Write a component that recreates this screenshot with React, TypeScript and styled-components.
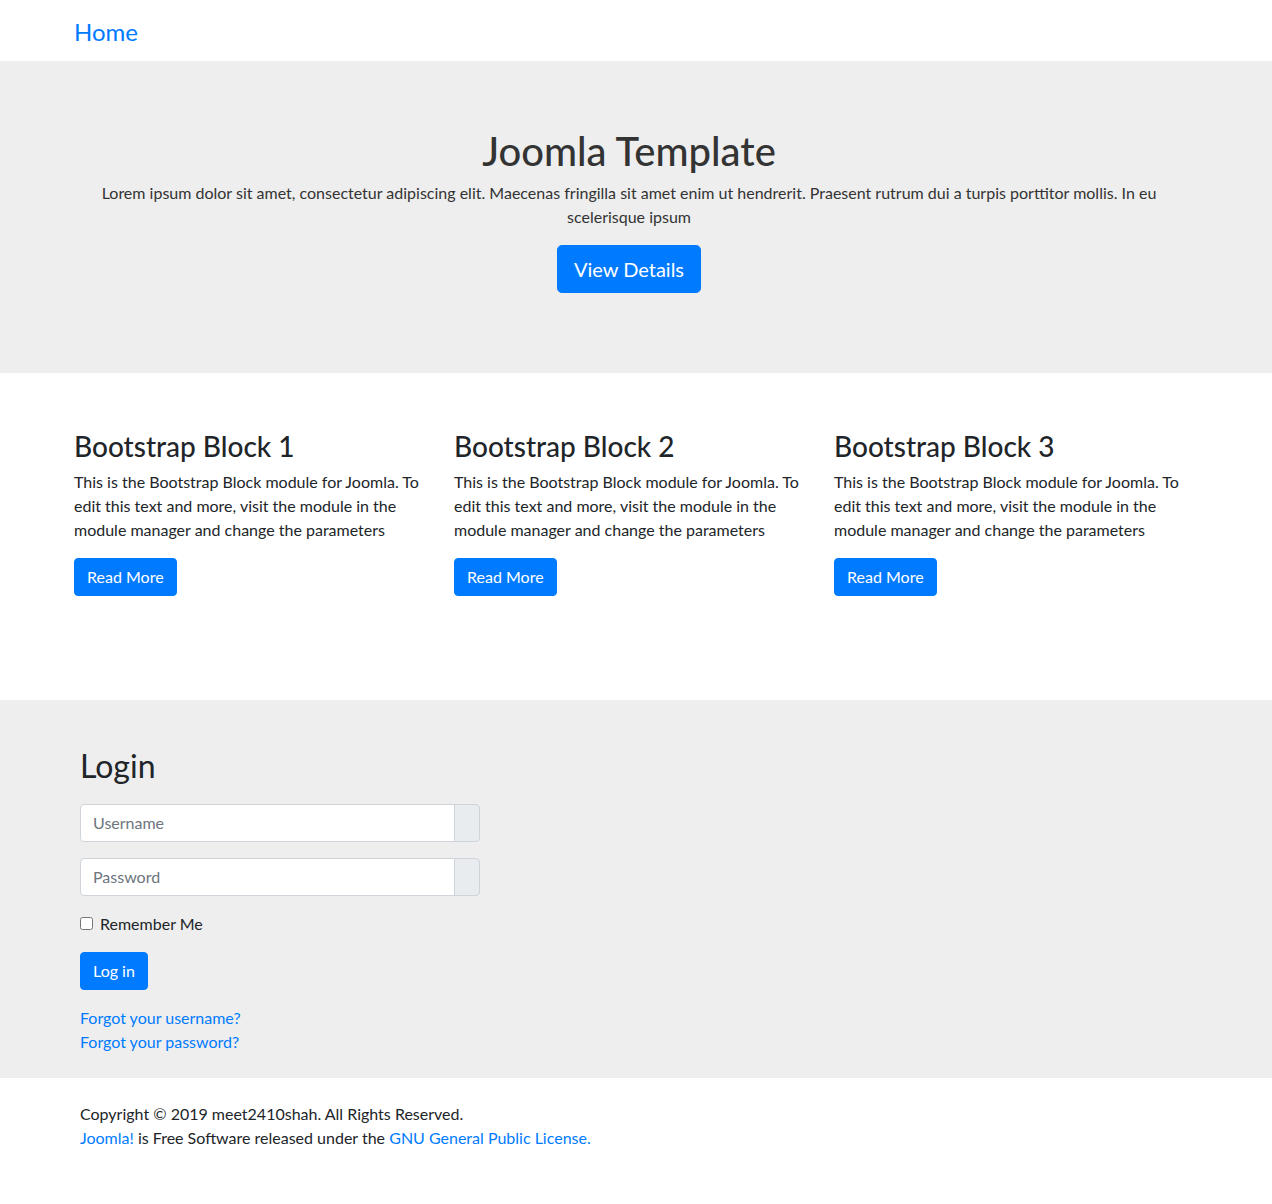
import React from "react";
import styled, { createGlobalStyle } from "styled-components";

const GlobalStyle = createGlobalStyle`
  html, body { margin: 0; padding: 0; }
  body {
    font-family: Lato, "Open Sans", sans-serif;
    font-size: 16px;
    line-height: 1.5;
    color: #212529;
    background: #fff;
  }
  * { box-sizing: border-box; }
`;

const Container = styled.div<{ $inset?: number }>`
  width: 1140px;
  margin-left: calc((100% - 1154px) / 2);
  padding: 0 ${(p) => 15 + (p.$inset ?? 0)}px;
`;

const NavBar = styled.nav`
  height: 61px;
  display: flex;
  align-items: center;
  background: #fff;
`;

const Brand = styled.a`
  font-size: 24px;
  line-height: 1.5;
  color: #007bff;
  text-decoration: none;
  display: inline-block;
  margin-top: 2px;
`;

const Jumbotron = styled.section`
  background: #eeeeee;
  padding: 64px 0;
  text-align: center;
`;

const HeroTitle = styled.h1`
  margin: 2px 0 6px;
  font-size: 40px;
  font-weight: 500;
  line-height: 1.2;
  color: #333;
`;

const HeroText = styled.p`
  margin: 0 0 16px;
  padding: 0 6px;
  color: #333;
`;

const Button = styled.a<{ $size?: "lg" | "md" }>`
  display: inline-block;
  background: #007bff;
  border: 1px solid #007bff;
  color: #fff;
  text-decoration: none;
  font-size: ${(p) => (p.$size === "lg" ? "20px" : "16px")};
  line-height: ${(p) => (p.$size === "lg" ? "30px" : "24px")};
  padding: ${(p) => (p.$size === "lg" ? "8px 16px" : "6px 12px")};
  border-radius: ${(p) => (p.$size === "lg" ? "4.8px" : "4px")};
  cursor: pointer;
`;

const ButtonLine = styled.p`
  margin: 0 0 16px;
`;

const BlocksSection = styled.section`
  padding: 57px 0 104px;
  background: #fff;
`;

const BlockGrid = styled.div`
  display: grid;
  grid-template-columns: repeat(3, 1fr);
  margin: 0 -15px;
`;

const Block = styled.div`
  padding: 0 15px;
`;

const BlockTitle = styled.h3`
  margin: 0 0 6px;
  font-size: 28px;
  font-weight: 500;
  line-height: 1.2;
  color: #212529;
`;

const BlockText = styled.p`
  margin: 0 0 16px;
  padding-right: 4px;
`;

const LoginSection = styled.section`
  background: #eeeeee;
  padding: 47px 0 24px;
`;

const LoginTitle = styled.h2`
  margin: 0 0 19px;
  font-size: 32px;
  font-weight: 400;
  line-height: 1.2;
  color: #212529;
`;

const InputGroup = styled.div`
  display: flex;
  width: 400px;
  height: 38px;
  margin-bottom: 16px;
`;

const Input = styled.input`
  flex: 1;
  min-width: 0;
  height: 38px;
  padding: 6px 12px;
  font: inherit;
  font-size: 16px;
  color: #495057;
  background: #fff;
  border: 1px solid #ced4da;
  border-radius: 4px 0 0 4px;
  outline: none;
  &::placeholder { color: #6c757d; }
`;

const Append = styled.span`
  width: 26px;
  margin-left: -1px;
  background: #e9ecef;
  border: 1px solid #ced4da;
  border-radius: 0 4px 4px 0;
`;

const CheckRow = styled.label`
  display: flex;
  align-items: center;
  gap: 7px;
  margin-bottom: 16px;
  line-height: 24px;
`;

const Check = styled.input`
  width: 13px;
  height: 13px;
  margin: 0;
`;

const LinkList = styled.ul`
  list-style: none;
  margin: 0;
  padding: 0;
`;

const Link = styled.a`
  color: #007bff;
  text-decoration: none;
`;

const Footer = styled.footer`
  background: #fff;
  padding: 24px 0 54px;
`;

const FooterLine = styled.p`
  margin: 0;
`;

const blocks = [1, 2, 3];

export default function App() {
  return (
    <>
      <GlobalStyle />
      <NavBar>
        <Container>
          <Brand href="#">Home</Brand>
        </Container>
      </NavBar>

      <Jumbotron>
        <Container>
          <HeroTitle>Joomla Template</HeroTitle>
          <HeroText>
            Lorem ipsum dolor sit amet, consectetur adipiscing elit. Maecenas fringilla sit amet enim ut hendrerit.
            Praesent rutrum dui a turpis porttitor mollis. In eu scelerisque ipsum
          </HeroText>
          <ButtonLine>
            <Button $size="lg" href="#">View Details</Button>
          </ButtonLine>
        </Container>
      </Jumbotron>

      <BlocksSection>
        <Container>
          <BlockGrid>
            {blocks.map((n) => (
              <Block key={n}>
                <BlockTitle>Bootstrap Block {n}</BlockTitle>
                <BlockText>
                  This is the Bootstrap Block module for Joomla. To edit this text and more, visit the module in the
                  module manager and change the parameters
                </BlockText>
                <Button $size="md" href="#">Read More</Button>
              </Block>
            ))}
          </BlockGrid>
        </Container>
      </BlocksSection>

      <LoginSection>
        <Container $inset={6}>
          <LoginTitle>Login</LoginTitle>
          <InputGroup>
            <Input type="text" placeholder="Username" />
            <Append />
          </InputGroup>
          <InputGroup>
            <Input type="password" placeholder="Password" />
            <Append />
          </InputGroup>
          <CheckRow>
            <Check type="checkbox" />
            Remember Me
          </CheckRow>
          <ButtonLine>
            <Button $size="md" href="#">Log in</Button>
          </ButtonLine>
          <LinkList>
            <li><Link href="#">Forgot your username?</Link></li>
            <li><Link href="#">Forgot your password?</Link></li>
          </LinkList>
        </Container>
      </LoginSection>

      <Footer>
        <Container $inset={6}>
          <FooterLine>Copyright © 2019 meet2410shah. All Rights Reserved.</FooterLine>
          <FooterLine>
            <Link href="#">Joomla!</Link> is Free Software released under the{" "}
            <Link href="#">GNU General Public License.</Link>
          </FooterLine>
        </Container>
      </Footer>
    </>
  );
}
